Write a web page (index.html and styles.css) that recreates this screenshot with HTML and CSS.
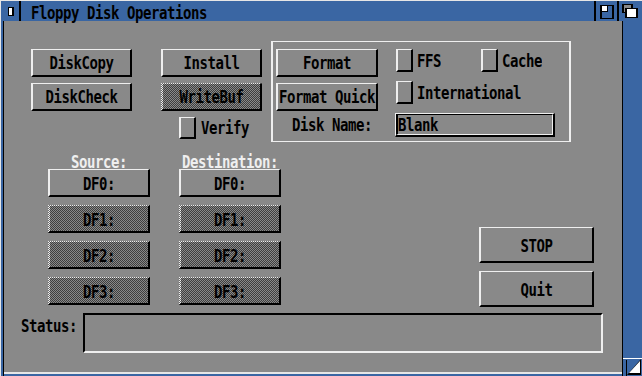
FILE: index.html
```html
<!DOCTYPE html>
<html>
<head>
<meta charset="utf-8">
<link rel="stylesheet" href="styles.css">
</head>
<body>
<div class="win">
  <div class="title">
    <div class="close">
      <svg width="18" height="20" viewBox="1 1 18 20"><rect x="8" y="7" width="6" height="9" fill="#000"/><rect x="9" y="8" width="3" height="7" fill="#fff"/></svg>
    </div>
    <div class="ttext"><span class="tx">Floppy Disk Operations</span></div>
    <div class="zoomg">
      <svg width="21" height="20" viewBox="596 1 21 20"><rect x="600" y="5" width="14" height="14" fill="#000"/><rect x="602" y="6" width="10" height="12" fill="#3a66a3"/><rect x="600" y="5" width="8" height="7" fill="#000"/><rect x="602" y="6" width="5" height="5" fill="#fff"/></svg>
    </div>
    <div class="depth">
      <svg width="23" height="20" viewBox="619 1 23 20"><rect x="622" y="4" width="11" height="9" fill="#000"/><rect x="624" y="5" width="7" height="7" fill="#898989"/><rect x="625" y="8" width="13" height="10" fill="#000"/><rect x="627" y="9" width="9" height="8" fill="#fff"/></svg>
    </div>
  </div>
  <div class="frame">
    <div class="lb"></div>
    <div class="main">
      <div class="content">
        <div class="top">
          <div class="colA">
            <div class="btn"><span class="tx">DiskCopy</span></div>
            <div class="btn"><span class="tx">DiskCheck</span></div>
          </div>
          <div class="colB">
            <div class="btn"><span class="tx">Install</span></div>
            <div class="btn off"><span class="tx">WriteBuf</span></div>
            <div class="chk verify"><div class="cb"></div><span class="tx">Verify</span></div>
          </div>
          <div class="group">
            <div class="grow r1">
              <div class="btn wf"><span class="tx">Format</span></div>
              <div class="chk ffs"><div class="cb"></div><span class="tx">FFS</span></div>
              <div class="chk"><div class="cb"></div><span class="tx">Cache</span></div>
            </div>
            <div class="grow r2">
              <div class="btn wf"><span class="tx">Format Quick</span></div>
              <div class="chk intl"><div class="cb"></div><span class="tx">International</span></div>
            </div>
            <div class="grow r3">
              <div class="dnlabel"><span class="tx">Disk Name:</span></div>
              <div class="field"><div class="fin"><span class="tx">Blank</span></div></div>
            </div>
          </div>
        </div>
        <div class="drives">
          <div class="dcol">
            <div class="dlabel"><span class="tx">Source:</span></div>
            <div class="dbtns">
              <div class="btn"><span class="tx">DF0:</span></div>
              <div class="btn off"><span class="tx">DF1:</span></div>
              <div class="btn off"><span class="tx">DF2:</span></div>
              <div class="btn off"><span class="tx">DF3:</span></div>
            </div>
          </div>
          <div class="dcol dest">
            <div class="dlabel"><span class="tx">Destination:</span></div>
            <div class="dbtns">
              <div class="btn"><span class="tx">DF0:</span></div>
              <div class="btn off"><span class="tx">DF1:</span></div>
              <div class="btn off"><span class="tx">DF2:</span></div>
              <div class="btn off"><span class="tx">DF3:</span></div>
            </div>
          </div>
          <div class="actions">
            <div class="btn big"><span class="tx">STOP</span></div>
            <div class="btn big"><span class="tx">Quit</span></div>
          </div>
        </div>
        <div class="status">
          <div class="slabel"><span class="tx">Status:</span></div>
          <div class="sfield"></div>
        </div>
      </div>
      <div class="bb"></div>
    </div>
    <div class="rb">
      <div class="size">
        <svg width="19" height="18" viewBox="623 358 19 18"><rect x="623" y="358" width="19" height="1" fill="#fff"/><rect x="626" y="360" width="1" height="16" fill="#000"/><polygon points="641,359 641,375 627,375" fill="#000"/><polygon points="640,361 640,373 629,373" fill="#fff"/></svg>
      </div>
    </div>
  </div>
</div>
</body>
</html>
```

FILE: styles.css
```css
html, body {
  margin: 0;
  padding: 0;
  background: #3a66a3;
}

.win {
  width: 642px;
  height: 376px;
  box-sizing: border-box;
  border-left: 1px solid #e6e6e6;
  border-top: 1px solid #e6e6e6;
  background: #3a66a3;
  display: flex;
  flex-direction: column;
  font-family: "DejaVu Sans Mono", "Liberation Mono", monospace;
  font-weight: bold;
  font-size: 14px;
  letter-spacing: -0.43px;
  color: #000;
  overflow: hidden;
}

.tx {
  display: inline-block;
  line-height: 16px;
  height: 16px;
  white-space: pre;
  transform: scaleY(1.3);
}

/* title bar */
.title {
  height: 20px;
  display: flex;
  flex: none;
}
.close {
  width: 18px;
  border-right: 2px solid #000;
}
.close svg, .zoomg svg, .depth svg, .size svg {
  display: block;
}
.ttext {
  flex: 1;
  padding-left: 10px;
  padding-top: 3px;
}
.zoomg {
  width: 21px;
  border-left: 2px solid #000;
}
.depth {
  width: 23px;
  border-left: 2px solid #000;
}

/* frame */
.frame {
  display: flex;
  flex: 1;
}
.lb {
  width: 2px;
  background: #3a66a3;
  border-right: 1px solid #000;
}
.main {
  width: 618px;
  display: flex;
  flex-direction: column;
}
.rb {
  width: 19px;
  border-left: 1px solid #000;
  background: #3a66a3;
  display: flex;
  flex-direction: column;
  justify-content: flex-end;
}
.size {
  height: 18px;
}
.bb {
  height: 4px;
  box-sizing: border-box;
  border-top: 2px solid #e6e6e6;
  background: #3a66a3;
}

.content {
  height: 351px;
  background: #898989;
  display: flex;
  flex-direction: column;
}

/* generic gadgets */
.btn {
  box-sizing: border-box;
  height: 28px;
  border-style: solid;
  border-width: 1px 2px 2px 2px;
  border-color: #efefef #000 #000 #efefef;
  display: flex;
  align-items: center;
  justify-content: center;
  position: relative;
}
.btn.off::after {
  content: "";
  position: absolute;
  top: -1px;
  left: -2px;
  right: -2px;
  bottom: -2px;
  background: repeating-conic-gradient(#000 0 25%, transparent 0 50%) 0 0 / 2px 2px;
  opacity: 0.55;
}
.chk {
  display: flex;
  align-items: center;
}
.cb {
  box-sizing: border-box;
  width: 17px;
  height: 23px;
  margin-right: 4px;
  border-style: solid;
  border-width: 1px 2px 2px 2px;
  border-color: #efefef #000 #000 #efefef;
}

/* top section */
.top {
  display: flex;
  align-items: flex-start;
  margin-top: 20px;
  padding-left: 27px;
}
.colA, .colB {
  width: 101px;
  margin-top: 8px;
  display: flex;
  flex-direction: column;
  gap: 6px;
}
.colB {
  margin-left: 29px;
}
.verify {
  margin-left: 18px;
}
.verify .cb {
  height: 22px;
  margin-right: 5px;
}
.group {
  margin-left: 9px;
  width: 300px;
  height: 101px;
  box-sizing: border-box;
  border-style: solid;
  border-color: #efefef;
  border-width: 1px 2px;
  padding: 7px 0 0 3px;
  display: flex;
  flex-direction: column;
}
.grow {
  display: flex;
  align-items: flex-start;
}
.grow .chk {
  height: 23px;
}
.r2 {
  margin-top: 6px;
}
.r3 {
  margin-top: 2px;
}
.wf {
  width: 102px;
}
.ffs {
  margin-left: 18px;
  width: 85px;
}
.intl {
  margin-left: 18px;
  margin-top: -2px;
}
.dnlabel {
  width: 119px;
  height: 24px;
  box-sizing: border-box;
  padding-left: 16px;
  display: flex;
  align-items: center;
}
.field {
  width: 160px;
  height: 24px;
  box-sizing: border-box;
  border-style: solid;
  border-width: 1px 2px 2px 1px;
  border-color: #efefef #000 #000 #efefef;
}
.fin {
  height: 100%;
  box-sizing: border-box;
  border-style: solid;
  border-width: 1px 1px 1px 2px;
  border-color: #000 #efefef #efefef #000;
  display: flex;
  align-items: center;
}

/* drives */
.drives {
  display: flex;
  align-items: flex-start;
  margin-top: 11px;
  padding-left: 44px;
}
.dcol {
  width: 102px;
  display: flex;
  flex-direction: column;
}
.dest {
  margin-left: 29px;
}
.dlabel {
  height: 16px;
  text-align: center;
  color: #efefef;
}
.dbtns {
  display: flex;
  flex-direction: column;
  gap: 8px;
}
.actions {
  margin-left: 198px;
  margin-top: 74px;
  width: 115px;
  display: flex;
  flex-direction: column;
  gap: 8px;
}
.big {
  height: 36px;
}

/* status */
.status {
  display: flex;
  align-items: flex-start;
  margin-top: 6px;
  padding-left: 17px;
}
.slabel {
  margin-top: 4px;
  width: 56px;
}
.sfield {
  margin-left: 6px;
  width: 520px;
  height: 40px;
  box-sizing: border-box;
  border-style: solid;
  border-width: 2px;
  border-color: #000 #efefef #efefef #000;
}
```
